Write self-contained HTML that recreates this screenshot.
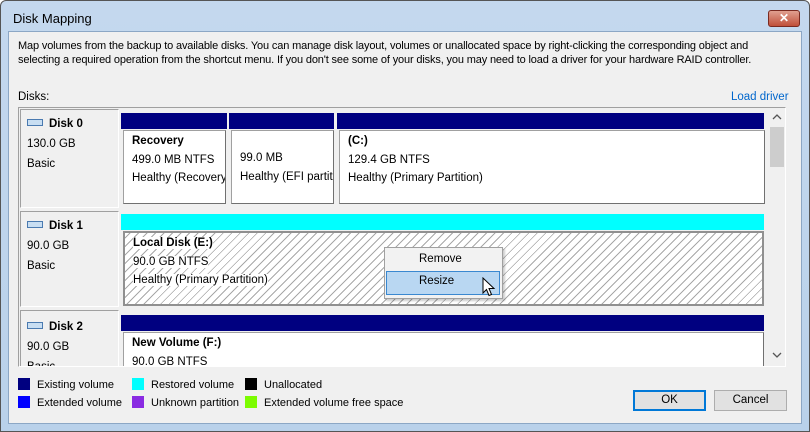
<!DOCTYPE html>
<html><head><style>
*{margin:0;padding:0;box-sizing:border-box}
body{width:810px;height:432px;overflow:hidden;background:#fff;font-family:"Liberation Sans",sans-serif;font-size:11.5px;color:#000;position:relative}
.a{position:absolute;white-space:nowrap}
.win{left:0;top:0;width:810px;height:432px;background:linear-gradient(#c4d8ee,#b9d1ea);border:1px solid #555;border-radius:6px 6px 0 0}
.client{left:8px;top:31px;width:794px;height:393px;background:#f0f0f0;border:1px solid #8ca7c5}
.bar{height:16px}
.nav{background:#000080}
.box{background:#fff;border:1px solid #a0a0a0;border-right-color:#707070;border-bottom-color:#707070;padding:1px 0 0 8px;line-height:18.5px;white-space:nowrap;overflow:hidden}
.lbl{line-height:20px;padding:3px 0 0 6px}
.ic{display:inline-block;width:16px;height:7px;border:1px solid #4a7ab0;background:#c8def2;margin-right:6px;vertical-align:1px}
.sq{width:12px;height:12px}
</style></head><body>
<div class="a win"></div>
<div class="a" style="left:13px;top:11px;font-size:13px">Disk Mapping</div>
<div class="a" style="left:768px;top:10px;width:32px;height:17px;background:linear-gradient(#e0a090,#c0503a);border:1px solid #7a2a20;border-radius:3px;color:#fff;font-weight:bold;text-align:center;line-height:15px;font-size:12px">✕</div>
<div class="a client"></div>
<div class="a" style="left:18px;top:40px;line-height:13.5px;font-size:11px;letter-spacing:-0.15px">Map volumes from the backup to available disks. You can manage disk layout, volumes or unallocated space by right-clicking the corresponding object and<br>selecting a required operation from the shortcut menu. If you don't see some of your disks, you may need to load a driver for your hardware RAID controller.</div>
<div class="a" style="left:18px;top:91px">Disks:</div>
<div class="a" style="left:731px;top:91px;color:#0066cc">Load driver</div>
<div class="a" style="left:18px;top:107px;width:768px;height:260px;background:#f0f0f0;border:1px solid #a0a0a0;border-right-color:#fff;border-bottom-color:#fff;overflow:hidden">
 <div class="a" style="left:748px;top:0;width:18px;height:258px;background:#f0f0f0"></div>
 <div class="a" style="left:751px;top:19px;width:14px;height:40px;background:#cdcdcd"></div>
 <svg class="a" style="left:753px;top:6px" width="10" height="6"><path d="M1 5 L5 1 L9 5" fill="none" stroke="#555" stroke-width="1.3"/></svg>
 <svg class="a" style="left:753px;top:244px" width="10" height="6"><path d="M1 1 L5 5 L9 1" fill="none" stroke="#555" stroke-width="1.3"/></svg>
 <div class="a" style="left:1px;top:1px;width:99px;height:99px;border:1px solid #a0a0a0;border-right-color:#fff;border-bottom-color:#fff"></div>
 <div class="a lbl" style="left:2px;top:3px"><b><span class="ic"></span>Disk 0</b><br>130.0 GB<br>Basic</div>
 <div class="a" style="left:1px;top:103px;width:99px;height:96px;border:1px solid #a0a0a0;border-right-color:#fff;border-bottom-color:#fff"></div>
 <div class="a lbl" style="left:2px;top:105px"><b><span class="ic"></span>Disk 1</b><br>90.0 GB<br>Basic</div>
 <div class="a" style="left:1px;top:202px;width:99px;height:80px;border:1px solid #a0a0a0;border-right-color:#fff"></div>
 <div class="a lbl" style="left:2px;top:206px"><b><span class="ic"></span>Disk 2</b><br>90.0 GB<br>Basic</div>
 <div class="a bar nav" style="left:102px;top:5px;width:106px"></div>
 <div class="a bar nav" style="left:210px;top:5px;width:105px"></div>
 <div class="a bar nav" style="left:318px;top:5px;width:427px"></div>
 <div class="a box" style="left:104px;top:22px;width:103px;height:74px"><b>Recovery</b><br>499.0 MB NTFS<br>Healthy (Recovery</div>
 <div class="a box" style="left:212px;top:22px;width:103px;height:74px;padding-top:18px">99.0 MB<br>Healthy (EFI partition</div>
 <div class="a box" style="left:320px;top:22px;width:426px;height:74px"><b>(C:)</b><br>129.4 GB NTFS<br>Healthy (Primary Partition)</div>
 <div class="a bar" style="left:102px;top:106px;width:643px;background:#00ffff"></div>
 <div class="a box" style="left:104px;top:123px;width:641px;height:75px;border:2px solid #909090;background:repeating-linear-gradient(135deg,#fff 0 3px,#a8a8a8 3px 4px,#fff 4px 6px)"><b style="background:#fff">Local Disk (E:)</b><br><span style="background:#fff">90.0 GB NTFS</span><br><span style="background:#fff">Healthy (Primary Partition)</span></div>
 <div class="a bar nav" style="left:102px;top:207px;width:643px"></div>
 <div class="a box" style="left:104px;top:224px;width:641px;height:60px"><b>New Volume (F:)</b><br>90.0 GB NTFS</div>
</div>
<div class="a" style="left:384px;top:247px;width:119px;height:52px;background:#f2f2f2;border:1px solid #a0a0a0;box-shadow:2px 2px 2px rgba(0,0,0,.2)"></div>
<div class="a" style="left:419px;top:253px">Remove</div>
<div class="a" style="left:386px;top:271px;width:114px;height:24px;background:#b9d7f2;border:1px solid #3a88d0"></div>
<div class="a" style="left:419px;top:275px">Resize</div>
<svg class="a" style="left:482px;top:277px" width="14" height="22" viewBox="0 0 14 22"><path d="M1 1 L1 16 L4.5 12.5 L7 18.5 L9.5 17.5 L7 11.5 L12 11.5 Z" fill="#fff" stroke="#000" stroke-width="1"/></svg>
<div class="a sq" style="left:18px;top:378px;background:#000080"></div><div class="a" style="left:37px;top:379px;font-size:11px">Existing volume</div>
<div class="a sq" style="left:18px;top:396px;background:#0000ff"></div><div class="a" style="left:37px;top:397px;font-size:11px">Extended volume</div>
<div class="a sq" style="left:132px;top:378px;background:#00ffff"></div><div class="a" style="left:151px;top:379px;font-size:11px">Restored volume</div>
<div class="a sq" style="left:132px;top:396px;background:#8a2be2"></div><div class="a" style="left:151px;top:397px;font-size:11px">Unknown partition</div>
<div class="a sq" style="left:245px;top:378px;background:#000"></div><div class="a" style="left:264px;top:379px;font-size:11px">Unallocated</div>
<div class="a sq" style="left:245px;top:396px;background:#7cfc00"></div><div class="a" style="left:264px;top:397px;font-size:11px">Extended volume free space</div>
<div class="a" style="left:633px;top:390px;width:73px;height:21px;background:#e1e1e1;border:2px solid #0078d7;text-align:center;line-height:17px">OK</div>
<div class="a" style="left:714px;top:390px;width:73px;height:21px;background:#e1e1e1;border:1px solid #adadad;text-align:center;line-height:19px">Cancel</div>
</body></html>
